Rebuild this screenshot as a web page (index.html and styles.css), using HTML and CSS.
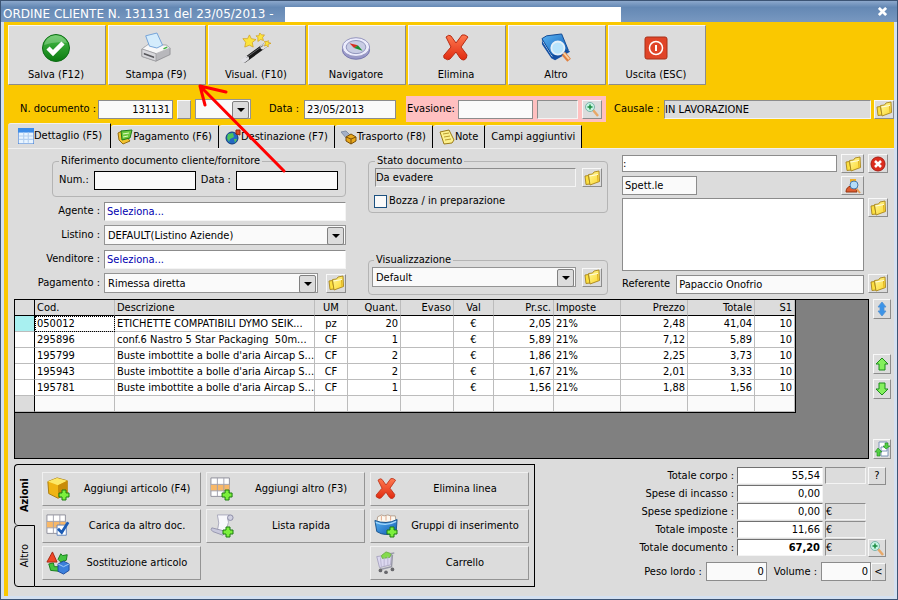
FILE: index.html
```html
<!DOCTYPE html>
<html lang="it">
<head>
  <meta charset="UTF-8" />
  <title>Ordine cliente</title>
  <link rel="stylesheet" href="styles.css">
</head>
<body>
  <svg class="defs" width="0" height="0">
    <defs>
      <linearGradient id="gold" x1="0" y1="0" x2="1" y2="1">
        <stop offset="0" stop-color="#fffba0" />
        <stop offset="1" stop-color="#fcd428" />
      </linearGradient>
      <linearGradient id="red" x1="0" y1="0" x2="0" y2="1">
        <stop offset="0" stop-color="#ff7a50" />
        <stop offset="1" stop-color="#e02a10" />
      </linearGradient>
      <linearGradient id="green" x1="0" y1="0" x2="0" y2="1">
        <stop offset="0" stop-color="#4cc04c" />
        <stop offset="1" stop-color="#0a7a10" />
      </linearGradient>
      <linearGradient id="blue" x1="0" y1="0" x2="1" y2="1">
        <stop offset="0" stop-color="#5ab4f4" />
        <stop offset="1" stop-color="#0f58b0" />
      </linearGradient>
    </defs>
    <symbol id="i-folder" viewBox="0 0 16 16">
      <path d="M1 6l3.500-.5L6 14l-4 .5z" fill="#fce040" stroke="#a88418" stroke-width=".9" />
      <path d="M4.500 4.500l4-.5 1.500-2 5-1 .5 10.500L6 15z" fill="url(#gold)" stroke="#a88418" stroke-width=".9" />
      <path d="M5.500 6l8.500-1.500" stroke="#fffce0" />
      <path d="M13.500 5l.5 6.500" stroke="#e0b020" />
    </symbol>
    <symbol id="i-cross" viewBox="0 0 30 30">
      <path d="M5 4q3-3 5-1l5 7 6-8q3-1 6 2l-7 10 6 8q0 4-3 5-3 0-4-2l-4-6-6 7q-2 2-6-1-1-3 1-4l6-7z" fill="url(#red)" stroke="#b82c14" stroke-linejoin="round" />
    </symbol>
    <symbol id="i-zoom" viewBox="0 0 16 16">
      <path d="M9 9l5 6" stroke="#e8a868" stroke-width="2.500" />
      <circle cx="6" cy="6" r="4.500" fill="#c8f4e4" stroke="#7cb4ac" />
      <path d="M6 3.500v5M3.500 6h5" stroke="#1a8c40" stroke-width="1.500" />
    </symbol>
    <symbol id="i-plus" viewBox="0 0 12 12">
      <path d="M4 1h4v3h3v4H8v3H4V8H1V4h3z" fill="#7cf03c" stroke="#1c7c10" />
    </symbol>
    <symbol id="i-sheet" viewBox="0 0 24 24">
      <path d="M1 1h20v20H1z" fill="#fff" stroke="#8c8c98" />
      <path d="M1 8h20v7H1z" fill="#f8b868" />
      <path d="M1 8h20M1 15h20M8 1v20M15 1v20" stroke="#a0a0ac" fill="none" />
    </symbol>
  </svg>

  <div class="window">
    <header class="titlebar">
      <h1>ORDINE CLIENTE N. 131131 del 23/05/2013 -</h1>
      <span class="blank"></span>
      <button class="close" aria-label="Chiudi">
        <svg viewBox="0 0 10 10"><path d="M1 1l8 8M9 1l-8 8" stroke="#fff" stroke-width="3" /></svg>
      </button>
    </header>

    <main class="client">
      <nav class="toolbar">
        <button>
          <svg viewBox="0 0 30 30">
            <circle cx="15" cy="15" r="13.500" fill="url(#green)" stroke="#0c6c14" />
            <path d="M3 12a12 12 0 0 1 23-2q-12-2-23 2z" fill="#fff" opacity=".25" />
            <path d="M7 15l5 5 10-10" fill="none" stroke="#fff" stroke-width="4.500" />
          </svg>
          Salva (F12)
        </button>
        <button>
          <svg viewBox="0 0 32 32">
            <path d="M1 17l7-5 19 1 4 3v7l-15 7-15-5z" fill="#b8b8bc" stroke="#88888c" stroke-width=".8" />
            <path d="M1 17l7-5 19 1 4 3-15 6z" fill="#f8f8f8" stroke="#b0b0b4" stroke-width=".8" />
            <path d="M1 17v8l15 5v-8z" fill="#d8d8dc" stroke="#98989c" stroke-width=".8" />
            <path d="M9 14L5 3l12-3 6 13-6 3z" fill="#d4ecfc" stroke="#70a0d8" />
            <path d="M3 21l11 4v2L3 23z" fill="#58585c" />
            <path d="M24 17l4-2" stroke="#3cb43c" stroke-width="1.500" />
          </svg>
          Stampa (F9)
        </button>
        <button>
          <svg viewBox="0 0 32 32">
            <path d="M4 29L26 13" stroke="#181818" stroke-width="5" stroke-linecap="round" />
            <path d="M3 29l3-2M23 15l4-3" stroke="#e0e0e4" stroke-width="5" stroke-linecap="round" />
            <path d="M6 26l18-13" stroke="#707074" />
            <path d="M9 2l2 4 5 1-4 3 1 5-4-2-5 2 1-5-3-4h5zM20 0l2 2 3 0-2 3 1 3-3-1-3 2 0-4-2-2h3zM29 8l0 2 3 1-3 1v3l-2-2-2 1 1-3-1-2h3z" fill="#fce43c" stroke="#d0a020" stroke-width=".8" />
          </svg>
          Visual. (F10)
        </button>
        <button>
          <svg viewBox="0 0 32 32">
            <ellipse cx="16" cy="18" rx="14.500" ry="10" fill="#9898c8" stroke="#7474ac" />
            <ellipse cx="16" cy="15" rx="14.500" ry="10" fill="#ececfc" stroke="#9090bc" />
            <ellipse cx="16" cy="15" rx="10.500" ry="7" fill="#c8cce4" stroke="#8c90b8" />
            <path d="M9 11l9 2-4 3z" fill="#d43020" />
            <path d="M18 13l5 6-9-3z" fill="#188c30" />
          </svg>
          Navigatore
        </button>
        <button>
          <svg viewBox="0 0 30 30"><use href="#i-cross" /></svg>
          Elimina
        </button>
        <button>
          <svg viewBox="0 0 32 32">
            <path d="M1 7v5l10 15 4 2 16-9-2-2-16 5z" fill="#1450a4" />
            <path d="M2 9l10 16" stroke="#d8e8f8" />
            <path d="M1 6l5-3 16-2 7 17-15 6q-3 0-4-3z" fill="url(#blue)" stroke="#0c4490" />
            <path d="M24 22l6 7" stroke="#e08040" stroke-width="5" />
            <path d="M24 21l6 7" stroke="#fcd0a0" stroke-width="2" />
            <circle cx="18" cy="16" r="7" fill="#b8e4fc" stroke="#e4f0f8" stroke-width="2" />
          </svg>
          Altro
        </button>
        <button>
          <svg viewBox="0 0 30 30">
            <rect x="4" y="4" width="22" height="22" rx="2" fill="#e04428" stroke="#a83018" />
            <circle cx="15" cy="15" r="6.500" fill="none" stroke="#fff" stroke-width="1.500" />
            <path d="M15 12v6" stroke="#fff" stroke-width="2" />
          </svg>
          Uscita (ESC)
        </button>
      </nav>

      <form class="docbar">
        <label class="docnum-label" for="docnum">N. documento :</label>
        <input class="docnum num" id="docnum" type="text" value="131131">
        <button type="button" class="stub" aria-label="Numero"></button>
        <div class="combo series"><select aria-label="Serie"><option></option></select></div>
        <label class="date-label" for="docdate">Data :</label>
        <input class="docdate" id="docdate" type="text" value="23/05/2013">
        <div class="evasione">
          <label for="evasione">Evasione:</label>
          <input class="docnum" id="evasione" type="text">
          <input class="short sunken" type="text" aria-label="Stato evasione" readonly>
          <button type="button" class="icon" aria-label="Cerca"><svg><use href="#i-zoom" /></svg></button>
        </div>
        <label class="causale-label" for="causale">Causale :</label>
        <input class="grow sunken" id="causale" type="text" value="IN LAVORAZIONE" readonly>
        <button type="button" class="icon" aria-label="Apri causale"><svg><use href="#i-folder" /></svg></button>
      </form>

      <div class="tabs" role="tablist">
        <button role="tab" class="active">
          <svg viewBox="0 0 14 14"><path d="M0 0h14v14H0z" fill="#e8f4ff" stroke="#3c78d0" /><path d="M0 0h14v4H0z" fill="#3c8ce8" /><path d="M1 7h12M1 10h12M5 4v9M9 4v9" stroke="#b4d0f0" /></svg>Dettaglio (F5)
        </button>
        <button role="tab">
          <svg viewBox="0 0 16 16"><path d="M1 4l4-2 8 10-7 3-4-4z" fill="#f4c430" stroke="#946c10" /><path d="M4 2l11-1-2 8-8 2z" fill="#6cc83c" stroke="#1c7c18" /><path d="M6 5l6-1M6 8l5-1" stroke="#e0fcc0" /></svg>Pagamento (F6)
        </button>
        <button role="tab">
          <svg viewBox="0 0 16 16"><circle cx="7" cy="9" r="6" fill="#2468c4" stroke="#103c78" /><path d="M3 5l5-1 1 4-4 2-1 3-2-4zM9 10l3 0-2 4z" fill="#4cc45c" /><path d="M11 1h4v5l-4-1z" fill="#e04828" stroke="#94240c" /></svg>Destinazione (F7)
        </button>
        <button role="tab">
          <svg viewBox="0 0 16 16"><path d="M0 3l5-1 5 5-4 3z" fill="#a4b0c8" stroke="#8490a4" /><path d="M5 8l5-3 5 3v4l-5 3-5-3z" fill="#e8a81c" stroke="#7c5008" /><path d="M5 8l5 2 5-2M10 10v5" fill="none" stroke="#7c5008" /></svg>Trasporto (F8)
        </button>
        <button role="tab">
          <svg viewBox="0 0 16 16"><path d="M1 3l9-2 5 10-2 3-8 1z" fill="#fcf08c" stroke="#9c7c18" /><path d="M4 5l6-1M5 8l6-1M6 11l6-1" stroke="#b89c30" /></svg>Note
        </button>
        <button role="tab">Campi aggiuntivi</button>
      </div>

      <section class="panel">
        <form class="details">
          <div class="col-left">
            <fieldset class="reference">
              <legend>Riferimento documento cliente/fornitore</legend>
              <label for="refnum">Num.:</label>
              <input class="boxed" id="refnum" type="text">
              <label for="refdate">Data :</label>
              <input class="boxed" id="refdate" type="text">
            </fieldset>
            <div class="rows">
              <label for="agente">Agente :</label>
              <input class="pick" id="agente" type="text" value="Seleziona...">
              <label for="listino">Listino :</label>
              <div class="combo"><select id="listino"><option>DEFAULT(Listino Aziende)</option></select></div>
              <label for="venditore">Venditore :</label>
              <input class="pick" id="venditore" type="text" value="Seleziona...">
              <label for="pagamento">Pagamento :</label>
              <div class="pair">
                <div class="combo grow"><select id="pagamento"><option>Rimessa diretta</option></select></div>
                <button type="button" class="icon" aria-label="Apri pagamento"><svg><use href="#i-folder" /></svg></button>
              </div>
            </div>
          </div>

          <div class="col-mid">
            <fieldset class="state">
              <legend>Stato documento</legend>
              <div class="pair">
                <input class="grow sunken" type="text" value="Da evadere" aria-label="Stato documento" readonly>
                <button type="button" class="icon" aria-label="Apri stato"><svg><use href="#i-folder" /></svg></button>
              </div>
              <label class="check"><input type="checkbox">Bozza / in preparazione</label>
            </fieldset>
            <fieldset class="view">
              <legend>Visualizzazione</legend>
              <div class="pair">
                <div class="combo grow"><select aria-label="Visualizzazione"><option>Default</option></select></div>
                <button type="button" class="icon" aria-label="Apri visualizzazione"><svg><use href="#i-folder" /></svg></button>
              </div>
            </fieldset>
          </div>

          <div class="col-right">
            <input class="customer" type="text" value=":" aria-label="Cliente">
            <button type="button" class="icon" aria-label="Apri cliente"><svg><use href="#i-folder" /></svg></button>
            <button type="button" class="icon" aria-label="Rimuovi cliente">
              <svg viewBox="0 0 16 16"><circle cx="8" cy="8" r="7" fill="#dc2c1c" stroke="#a81c14" /><path d="M5 5l6 6M11 5l-6 6" stroke="#fff" stroke-width="2.500" /></svg>
            </button>
            <input class="greeting" type="text" value="Spett.le" aria-label="Titolo">
            <button type="button" class="icon search-person" aria-label="Cerca cliente">
              <svg viewBox="0 0 16 16"><path d="M5 1h6v3H5z" fill="#f0b028" /><path d="M1 14q0-5 5-6h4l2 6z" fill="#e05c30" stroke="#943410" /><path d="M11 10l4 5" stroke="#e8a058" stroke-width="2" /><circle cx="9" cy="7" r="4" fill="#b4dcf8" stroke="#4878a8" /></svg>
            </button>
            <textarea class="address" aria-label="Indirizzo"></textarea>
            <button type="button" class="icon" aria-label="Apri indirizzo"><svg><use href="#i-folder" /></svg></button>
            <div class="pair referente">
              <label for="referente">Referente</label>
              <input class="grow" id="referente" type="text" value="Papaccio Onofrio">
            </div>
            <button type="button" class="icon" aria-label="Apri referente"><svg><use href="#i-folder" /></svg></button>
          </div>
        </form>

        <div class="lines">
          <div class="grid">
            <table>
              <colgroup>
                <col class="c-head"><col class="c-cod"><col class="c-desc"><col class="c-um"><col class="c-qty"><col class="c-qty"><col class="c-val"><col class="c-price"><col class="c-wide"><col class="c-wide"><col class="c-wide"><col class="c-s1">
              </colgroup>
              <thead>
                <tr><th></th><th>Cod.</th><th>Descrizione</th><th class="mid">UM</th><th class="num">Quant.</th><th class="num">Evaso</th><th class="mid">Val</th><th class="num">Pr.sc.</th><th>Imposte</th><th class="num">Prezzo</th><th class="num">Totale</th><th class="num">S1</th></tr>
              </thead>
              <tbody>
                <tr class="current"><td></td><td class="focus">050012</td><td>ETICHETTE COMPATIBILI DYMO SEIK...</td><td class="mid">pz</td><td class="num">20</td><td></td><td class="mid">€</td><td class="num">2,05</td><td>21%</td><td class="num">2,48</td><td class="num">41,04</td><td class="num">10</td></tr>
                <tr><td></td><td>295896</td><td>conf.6 Nastro 5 Star Packaging&nbsp; 50m...</td><td class="mid">CF</td><td class="num">1</td><td></td><td class="mid">€</td><td class="num">5,89</td><td>21%</td><td class="num">7,12</td><td class="num">5,89</td><td class="num">10</td></tr>
                <tr><td></td><td>195799</td><td>Buste imbottite a bolle d'aria Aircap S...</td><td class="mid">CF</td><td class="num">2</td><td></td><td class="mid">€</td><td class="num">1,86</td><td>21%</td><td class="num">2,25</td><td class="num">3,73</td><td class="num">10</td></tr>
                <tr><td></td><td>195943</td><td>Buste imbottite a bolle d'aria Aircap S...</td><td class="mid">CF</td><td class="num">2</td><td></td><td class="mid">€</td><td class="num">1,67</td><td>21%</td><td class="num">2,01</td><td class="num">3,33</td><td class="num">10</td></tr>
                <tr><td></td><td>195781</td><td>Buste imbottite a bolle d'aria Aircap S...</td><td class="mid">CF</td><td class="num">1</td><td></td><td class="mid">€</td><td class="num">1,56</td><td>21%</td><td class="num">1,88</td><td class="num">1,56</td><td class="num">10</td></tr>
                <tr class="empty"><td></td><td></td><td></td><td></td><td></td><td></td><td></td><td></td><td></td><td></td><td></td><td></td></tr>
              </tbody>
            </table>
          </div>
          <div class="side">
            <button class="icon" aria-label="Ordina"><svg viewBox="0 0 16 16"><path d="M8 1l4 5h-2v4h2l-4 5-4-5h2V6H4z" fill="#3c94e8" stroke="#5090d0" stroke-width=".8" /></svg></button>
            <button class="icon up" aria-label="Sposta su"><svg viewBox="0 0 16 16"><path d="M8 2l6 6h-3v6H5V8H2z" fill="#84f05c" stroke="#1c8c1c" /></svg></button>
            <button class="icon" aria-label="Sposta giù"><svg viewBox="0 0 16 16"><path d="M8 14L2 8h3V2h6v6h3z" fill="#84f05c" stroke="#1c8c1c" /></svg></button>
            <button class="icon last" aria-label="Aggiorna"><svg viewBox="0 0 16 16"><path d="M5 1h8v9H5zM7 6h7v9H7z" fill="#fff" stroke="#7c94b8" /><path d="M4 7l4 4H6v4H3v-4H1zM12 8L9 5h2V2l3 0v3h2z" fill="#54d044" stroke="#1c8c1c" stroke-width=".6" /></svg></button>
          </div>
        </div>

        <div class="bottom">
          <div class="actions">
            <div class="rail" role="tablist">
              <button role="tab" class="active"><span>Azioni</span></button>
              <button role="tab"><span>Altro</span></button>
            </div>
            <div class="buttons">
              <button>
                <svg viewBox="0 0 26 26"><path d="M2 5l10-4 11 3v14l-10 5-10-5z" fill="#f0b414" stroke="#a87808" /><path d="M2 5l10-4 11 3-10 5z" fill="#fce868" /><path d="M13 9l10-5v14l-10 5z" fill="#c88c08" /><use href="#i-plus" x="13" y="13" width="13" height="13" /></svg>
                <span>Aggiungi articolo (F4)</span>
              </button>
              <button>
                <svg viewBox="0 0 26 26"><use href="#i-sheet" width="24" height="24" /><use href="#i-plus" x="12" y="13" width="13" height="13" /></svg>
                <span>Aggiungi altro (F3)</span>
              </button>
              <button>
                <svg viewBox="0 0 26 26"><use href="#i-cross" width="26" height="26" /></svg>
                <span>Elimina linea</span>
              </button>
              <button>
                <svg viewBox="0 0 26 26"><use href="#i-sheet" width="24" height="24" /><path d="M12 12h10v11H12z" fill="#fff" stroke="#5c80b8" /><path d="M13 16l4 4 7-11" fill="none" stroke="#1c5cb4" stroke-width="3" /></svg>
                <span>Carica da altro doc.</span>
              </button>
              <button>
                <svg viewBox="0 0 26 26"><path d="M8 1h13q-3 4-1 8l-3 11-9-2q3-8 0-17z" fill="#f8f8fc" stroke="#a8a8bc" /><path d="M2 15l12 3q3 3 0 5L3 19q-3-2-1-4z" fill="#c8c8dc" stroke="#9494ac" /><circle cx="22" cy="4" r="3" fill="#d0d0e0" stroke="#8888a4" /><use href="#i-plus" x="13" y="13" width="13" height="13" /></svg>
                <span>Lista rapida</span>
              </button>
              <button>
                <svg viewBox="0 0 26 26"><path d="M4 3l4-2 3 1 4-1 3 1 5 0 1 7H3z" fill="#fcf8f0" stroke="#b09c8c" /><path d="M8 2v5M13 2v5M18 2v5" stroke="#e0a080" /><path d="M1 7q12 5 24-1l-1 14q-12 5-21-1z" fill="url(#blue)" stroke="#14508c" /><path d="M2 9q11 5 22-1" fill="none" stroke="#a4d8fc" stroke-width="1.500" /><use href="#i-plus" x="13" y="13" width="13" height="13" /></svg>
                <span>Gruppi di inserimento</span>
              </button>
              <button>
                <svg viewBox="0 0 26 26"><path d="M7 1l5 11H1z" fill="#f04828" stroke="#a42410" /><path d="M13 9l3-6 2 2 5-1-1 6-6 2zM3 14l5-1 1 4h5v5l-9-1z" fill="#44c440" stroke="#147c18" /><path d="M13 14l6-3 6 3v7l-6 4-6-3z" fill="#3c80dc" stroke="#18489c" /><path d="M13 14l6 3 6-3" fill="none" stroke="#a8d0fc" /></svg>
                <span>Sostituzione articolo</span>
              </button>
              <button class="cart">
                <svg viewBox="0 0 26 26"><path d="M3 6l16-2-1 11-12 3z" fill="#dcd8f0" stroke="#a8a4c0" /><path d="M8 5l5-4 6 2-2 4-8 1z" fill="#84dc4c" stroke="#6cb048" /><path d="M7 7l1 10M11 7v10M15 6v10" stroke="#b8b4d0" /><path d="M18 3l4-1M20 4l-1 13-12 3" fill="none" stroke="#9898a8" stroke-width="1.500" /><circle cx="7" cy="21" r="2" fill="#68686c" /><circle cx="13" cy="23" r="2" fill="#68686c" /><circle cx="20" cy="20" r="2" fill="#68686c" /></svg>
                <span>Carrello</span>
              </button>
            </div>
          </div>

          <form class="summary">
            <div class="totals">
              <label for="corpo">Totale corpo :</label>
              <input class="num inset" id="corpo" type="text" value="55,54">
              <input class="sunken" type="text" aria-label="Valuta corpo" readonly>
              <button type="button" class="icon">?</button>
              <label for="incasso">Spese di incasso :</label>
              <input class="num inset" id="incasso" type="text" value="0,00">
              <label class="newline" for="spedizione">Spese spedizione :</label>
              <input class="num inset" id="spedizione" type="text" value="0,00">
              <input class="sunken" type="text" value="€" aria-label="Valuta spedizione" readonly>
              <label class="newline" for="imposte">Totale imposte :</label>
              <input class="num inset" id="imposte" type="text" value="11,66">
              <input class="sunken" type="text" value="€" aria-label="Valuta imposte" readonly>
              <label class="newline" for="totale">Totale documento :</label>
              <input class="num inset strong" id="totale" type="text" value="67,20">
              <input class="sunken" type="text" value="€" aria-label="Valuta totale" readonly>
              <button type="button" class="icon" aria-label="Dettaglio totale"><svg><use href="#i-zoom" /></svg></button>
            </div>
            <div class="weights">
              <label for="peso">Peso lordo :</label>
              <input class="num weight" id="peso" type="text" value="0">
              <label for="volume">Volume :</label>
              <input class="num volume" id="volume" type="text" value="0">
              <button type="button" class="icon">&lt;</button>
            </div>
          </form>
        </div>
      </section>
    </main>

    <svg class="arrow" viewBox="0 0 90 92">
      <path d="M86 87L3 3M7 21L2 2L28 8" fill="none" stroke="#ff0000" stroke-width="3" stroke-linecap="round" stroke-linejoin="round" />
    </svg>
  </div>
</body>
</html>
```

FILE: styles.css
```css
* {
  box-sizing: border-box;
}

body {
  margin: 0;
  font-family: "DejaVu Sans Condensed", "DejaVu Sans", sans-serif;
  font-size: 11px;
  line-height: 14px;
  color: #000;
}

button, input, select, textarea {
  font: inherit;
  color: inherit;
  margin: 0;
  min-width: 0;
}

label {
  white-space: nowrap;
}

.defs {
  position: absolute;
}

.window {
  position: relative;
  display: flex;
  flex-direction: column;
  min-height: 100vh;
  border: 1px solid #3c5474;
  background-color: #d4e0f0;
}

/* title bar */
.titlebar {
  display: flex;
  align-items: center;
  height: 21px;
  padding: 5px 8px 0 2px;
  background: linear-gradient(#8ca8cc, #6488b4 30%, #7898c0);
  color: #fff;
}

.titlebar h1 {
  min-width: 282px;
  margin: 0;
  font-family: "DejaVu Sans", sans-serif;
  font-size: 12px;
  font-weight: normal;
  white-space: nowrap;
}

.blank {
  width: 336px;
  height: 15px;
  background-color: #fff;
}

.close {
  width: 12px;
  height: 12px;
  margin: 0 0 6px auto;
  padding: 1px;
  border: none;
  background: none;
}

.close svg {
  display: block;
  width: 9px;
  height: 9px;
}

.client {
  flex: 1;
  display: flex;
  flex-direction: column;
  margin: 0 3px 3px;
  padding: 3px 0 0 4px;
  background-color: #fac800;
}

/* main toolbar */
.toolbar {
  display: flex;
  gap: 2px;
}

.toolbar button {
  display: flex;
  flex-direction: column;
  align-items: center;
  gap: 4px;
  width: 98px;
  height: 60px;
  padding: 6px 2px 0 0;
  background-color: #dcdcdc;
  border: 1px solid;
  border-color: #f8f8f8 #8c8c8c #8c8c8c #f8f8f8;
}

.toolbar svg {
  width: 30px;
  height: 32px;
}

/* inputs */
input, textarea {
  height: 19px;
  padding: 0 2px;
  border: 1px solid #8c8c8c;
  border-radius: 0;
  background-color: #fafafa;
  outline: none;
}

.num {
  text-align: right;
}

.grow {
  flex: 1;
}

.sunken {
  padding: 0;
  background-color: #dcdcdc;
  border-color: #8c8c8c #f4f4f4 #f4f4f4 #8c8c8c;
}

.inset {
  background-color: #fff;
  border-color: #707070 #f4f4f4 #f4f4f4 #707070;
}

.combo {
  position: relative;
  display: flex;
}

.combo select {
  width: 100%;
  height: 20px;
  padding: 1px 20px 0 3px;
  appearance: none;
  border: 1px solid #949494;
  border-radius: 0;
  background-color: #fafafa;
}

.combo::before {
  content: "";
  position: absolute;
  top: 2px;
  right: 2px;
  width: 15px;
  height: 16px;
  border: 1px solid #808080;
  border-radius: 2px;
  background-color: #dcdcdc;
  pointer-events: none;
}

.combo::after {
  content: "";
  position: absolute;
  top: 9px;
  right: 6px;
  border: 4px solid transparent;
  border-top-color: #000;
  border-bottom: none;
  pointer-events: none;
}

.icon {
  display: flex;
  align-items: center;
  justify-content: center;
  width: 20px;
  height: 19px;
  padding: 0;
  background-color: #dcdcdc;
  border: 1px solid;
  border-color: #f8f8f8 #8c8c8c #8c8c8c #f8f8f8;
}

.icon svg {
  width: 16px;
  height: 16px;
}

.pair {
  display: flex;
  align-items: center;
  gap: 6px;
}

/* document bar */
.docbar {
  display: flex;
  align-items: center;
  height: 26px;
  margin-top: 11px;
}

.docnum-label {
  width: 90px;
  padding-left: 12px;
}

.docnum {
  width: 75px;
}

.stub {
  width: 14px;
  height: 19px;
  margin: 0 4px;
  border: 1px solid;
  border-color: #f8f8f8 #8c8c8c #8c8c8c #f8f8f8;
  background-color: #dcdcdc;
}

.series {
  width: 56px;
}

.date-label {
  width: 53px;
  padding-left: 18px;
}

.docdate {
  width: 92px;
}

.evasione {
  display: flex;
  align-items: center;
  gap: 4px;
  height: 26px;
  margin-left: 10px;
  padding: 0 4px 0 1px;
  background-color: #ffc0c0;
}

.evasione label {
  width: 47px;
}

.short {
  width: 41px;
}

.causale-label {
  width: 58px;
  padding-left: 8px;
}

.docbar > .icon {
  margin-left: 3px;
}

/* page tabs */
.tabs {
  display: flex;
  align-items: flex-end;
  height: 25px;
  margin-top: 1px;
}

.tabs button {
  display: flex;
  align-items: center;
  height: 23px;
  padding: 0 6px;
  border: none;
  border-top: 1px solid #f0f0f0;
  border-right: 1px solid #000;
  border-radius: 3px 1px 0 0;
  background-color: #dcdcdc;
  white-space: nowrap;
}

.tabs .active {
  height: 25px;
  padding: 0 8px 0 10px;
}

.tabs svg {
  width: 16px;
  height: 16px;
}

.panel {
  flex: 1;
  display: flex;
  flex-direction: column;
  padding: 5px 3px 6px 6px;
  border-top: 1px solid #f0f0f0;
  background-color: #dcdcdc;
}

/* header fields */
.details {
  display: flex;
  height: 145px;
}

fieldset {
  min-width: 0;
  margin: 0;
  border: 1px solid #b4b4b4;
  border-radius: 4px;
}

legend {
  padding: 0 2px;
}

.col-left {
  width: 332px;
}

.reference {
  display: flex;
  align-items: center;
  gap: 5px;
  height: 43px;
  margin-left: 38px;
  padding: 0 7px 4px 6px;
}

.boxed {
  flex: 1;
  border-color: #000;
}

.rows {
  display: grid;
  grid-template-columns: 86px 1fr;
  grid-auto-rows: 20px;
  gap: 4px;
  align-items: center;
  margin-top: 4px;
}

.rows > label {
  text-align: right;
}

.rows .pair {
  gap: 8px;
}

.pick {
  color: #0000b0;
  background-color: #fff;
  border-color: #8c8c8c #f4f4f4 #f4f4f4 #8c8c8c;
}

.col-mid {
  display: flex;
  flex-direction: column;
  justify-content: space-between;
  width: 240px;
  margin: 0 14px 4px 22px;
}

.state {
  height: 59px;
  padding: 0 5px 0 6px;
}

.check {
  display: flex;
  align-items: center;
  gap: 2px;
  margin: 7px 0 0 -1px;
}

.check input {
  appearance: none;
  width: 13px;
  height: 13px;
  border-color: #1c5180;
}

.view {
  height: 42px;
  padding: 0 5px 0 3px;
}

.view legend {
  margin-left: 2px;
}

.col-right {
  flex: 1;
  display: grid;
  grid-template-columns: 1fr 23px 20px;
  grid-template-rows: 19px 19px 73px 20px;
  gap: 3px 4px;
  align-content: start;
  margin-right: 3px;
}

.customer {
  height: 17px;
  align-self: center;
  padding: 0;
  background-color: #fff;
}

.col-right .icon {
  width: auto;
}

.greeting {
  width: 75px;
}

.search-person {
  grid-column: 2;
}

.address {
  grid-column: 1 / 3;
  height: 73px;
  resize: none;
  background-color: #fff;
}

.referente {
  grid-column: 1 / 3;
}

/* order lines */
.lines {
  display: flex;
  gap: 4px;
  height: 160px;
}

.grid {
  flex: 1;
  border: 1px solid #000;
  background-color: #808080;
  overflow: hidden;
}

table {
  width: 781px;
  table-layout: fixed;
  border-collapse: separate;
  border-spacing: 0;
  border-right: 1px solid #000;
  border-bottom: 1px solid #000;
}

.c-head { width: 20px; }
.c-cod { width: 80px; }
.c-desc { width: 200px; }
.c-um { width: 33px; }
.c-qty { width: 53px; }
.c-val { width: 40px; }
.c-price { width: 60px; }
.c-wide { width: 67px; }
.c-s1 { width: 40px; }

th, td {
  height: 16px;
  padding: 0 2px;
  border-right: 1px solid #bcbcbc;
  border-bottom: 1px solid #bcbcbc;
  background-color: #fff;
  font-weight: normal;
  text-align: left;
  line-height: 15px;
  white-space: nowrap;
  overflow: hidden;
}

th {
  background-color: #dcdcdc;
  border-bottom-color: #000;
}

th:first-child, td:first-child {
  border-right-color: #000;
}

th.num, td.num {
  text-align: right;
}

th.mid, td.mid {
  text-align: center;
}

.current td:first-child {
  background-color: #a8f0f0;
}

.focus {
  outline: 1px dotted #000;
  outline-offset: -1px;
}

.empty td {
  background-color: #fafafa;
}

.empty td:first-child {
  background-color: #dcdcdc;
}

.side {
  display: flex;
  flex-direction: column;
  gap: 5px;
}

.side .icon {
  width: 18px;
  height: 20px;
}

.side .up {
  margin-top: 30px;
}

.side .last {
  margin-top: auto;
}

/* actions and totals */
.bottom {
  display: flex;
  justify-content: space-between;
  margin-top: 5px;
}

.actions {
  display: flex;
  width: 521px;
  height: 123px;
}

.rail {
  display: flex;
  flex-direction: column;
  width: 21px;
}

.rail button {
  flex: 1;
  display: flex;
  align-items: center;
  justify-content: center;
  padding: 0;
  border: 1px solid #000;
  border-radius: 4px 0 0 4px;
  background-color: #dcdcdc;
}

.rail .active {
  border-right: none;
  border-bottom: none;
  font-weight: bold;
}

.rail span {
  writing-mode: vertical-rl;
  transform: rotate(180deg);
}

.buttons {
  flex: 1;
  display: grid;
  grid-template-columns: repeat(3, 1fr);
  grid-auto-rows: 34px;
  gap: 3px 5px;
  padding: 7px 5px 0 7px;
  border: 1px solid #000;
  border-left: none;
}

.buttons button {
  display: flex;
  align-items: center;
  gap: 4px;
  padding: 0 0 0 3px;
  background-color: #dcdcdc;
  border: 1px solid;
  border-color: #f0f0f0 #949494 #949494 #f0f0f0;
}

.buttons span {
  flex: 1;
  white-space: nowrap;
}

.buttons svg {
  width: 24px;
  height: 24px;
}

.cart {
  grid-column: 3;
}

.summary {
  display: flex;
  flex-direction: column;
  align-items: flex-end;
  gap: 6px;
  padding: 3px 5px 0 0;
}

.totals {
  display: grid;
  grid-template-columns: auto 86px 41px 18px;
  grid-auto-rows: 17px;
  gap: 1px 2px;
  align-items: center;
}

.totals label {
  padding-right: 1px;
  text-align: right;
}

.newline {
  grid-column: 1;
}

.totals input {
  height: 17px;
}

.totals .icon {
  width: 18px;
  height: 18px;
}

.strong {
  font-weight: bold;
}

.weights {
  display: flex;
  align-items: center;
}

.weights label {
  padding-right: 4px;
}

.weight {
  width: 61px;
  margin-right: 7px;
}

.volume {
  width: 50px;
}

.weights .icon {
  width: 15px;
  height: 18px;
}

/* red pointer over the form */
.arrow {
  position: absolute;
  top: 83px;
  left: 197px;
  width: 90px;
  height: 92px;
  pointer-events: none;
}
```
